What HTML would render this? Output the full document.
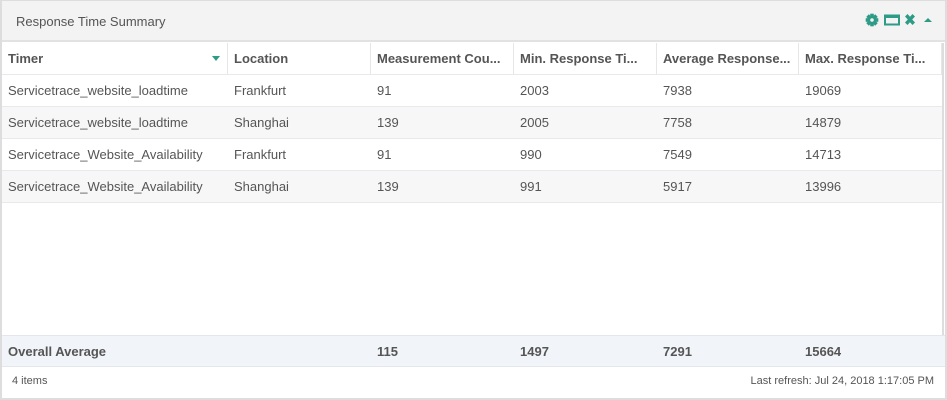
<!DOCTYPE html>
<html><head><style>
*{margin:0;padding:0;box-sizing:border-box}
body{width:947px;height:400px;background:#fff;font-family:"Liberation Sans",sans-serif;color:#555;overflow:hidden;position:relative}
.frame{position:absolute;left:0;top:0;width:947px;height:400px;border:2px solid #ddd;border-top-width:1px}
.hdr{position:absolute;left:2px;top:1px;width:943px;height:41px;background:#f3f3f3;border-bottom:2px solid #e2e2e2}
.title{position:absolute;left:14px;top:13px;font-size:13px;color:#555}
.row{position:absolute;left:2px;width:940px;height:32px;border-bottom:1px solid #e6e9ed}
.row div{position:absolute;top:0;height:31px;line-height:31px;font-size:13px;padding-left:6px;white-space:nowrap}
.th div{font-weight:bold;border-right:1px solid #e6e6e6}
.alt{background:#f7f7f7}
.c1{left:0;width:226px}.c2{left:226px;width:143px}.c3{left:369px;width:143px}.c4{left:512px;width:143px}.c5{left:655px;width:142px}.c6{left:797px;width:143px}
.sb{position:absolute;left:942px;top:43px;width:2px;height:292px;background:#ddd}
.foot{position:absolute;left:2px;top:335px;width:943px;height:32px;background:#f1f4f8;border-top:1px solid #e3e7ec;border-bottom:1px solid #e3e7ec}
.foot div{position:absolute;top:0;line-height:31px;font-size:13px;font-weight:bold;padding-left:6px}
.st{position:absolute;top:375px;font-size:11px;color:#555}
</style></head><body>
<div class="frame"></div>
<div class="hdr"><div class="title">Response Time Summary</div>
<svg style="position:absolute;left:862px;top:11px" width="72" height="16" viewBox="0 0 72 16">
<g fill="#2e9b87">
<g transform="translate(8,8)"><circle r="4.8"/><rect x="-1.8" y="-6.3" width="3.6" height="12.6"/><rect x="-6.3" y="-1.8" width="12.6" height="3.6"/><rect x="-1.8" y="-6.3" width="3.6" height="12.6" transform="rotate(45)"/><rect x="-1.8" y="-6.3" width="3.6" height="12.6" transform="rotate(-45)"/><circle r="1.8" fill="#f3f3f3"/></g>
<path d="M20 2.5h16v11h-16zM22 6v5.5h12v-5.5z"/>
<path d="M41 4.5l2.5-2.5 2.5 2.8 2.5-2.8 2.5 2.5-2.8 3 2.8 3-2.5 2.5-2.5-2.8-2.5 2.8-2.5-2.5 2.8-3z"/>
<path d="M60 10l4-4 4 4z"/>
</g></svg>
</div>
<div class="row th" style="top:43px"><div class="c1">Timer<svg style="position:absolute;left:210px;top:13px" width="8" height="5"><path d="M0 0h8l-4 5z" fill="#2e9b87"/></svg></div><div class="c2">Location</div><div class="c3">Measurement Cou...</div><div class="c4">Min. Response Ti...</div><div class="c5">Average Response...</div><div class="c6">Max. Response Ti...</div></div>
<div class="row" style="top:75px"><div class="c1">Servicetrace_website_loadtime</div><div class="c2">Frankfurt</div><div class="c3">91</div><div class="c4">2003</div><div class="c5">7938</div><div class="c6">19069</div></div>
<div class="row alt" style="top:107px"><div class="c1">Servicetrace_website_loadtime</div><div class="c2">Shanghai</div><div class="c3">139</div><div class="c4">2005</div><div class="c5">7758</div><div class="c6">14879</div></div>
<div class="row" style="top:139px"><div class="c1">Servicetrace_Website_Availability</div><div class="c2">Frankfurt</div><div class="c3">91</div><div class="c4">990</div><div class="c5">7549</div><div class="c6">14713</div></div>
<div class="row alt" style="top:171px"><div class="c1">Servicetrace_Website_Availability</div><div class="c2">Shanghai</div><div class="c3">139</div><div class="c4">991</div><div class="c5">5917</div><div class="c6">13996</div></div>
<div class="sb"></div>
<div class="foot"><div class="c1">Overall Average</div><div class="c3">115</div><div class="c4">1497</div><div class="c5">7291</div><div class="c6">15664</div></div>
<div class="st" style="left:12px">4 items</div>
<div class="st" style="right:13px">Last refresh: Jul 24, 2018 1:17:05 PM</div>
</body></html>
